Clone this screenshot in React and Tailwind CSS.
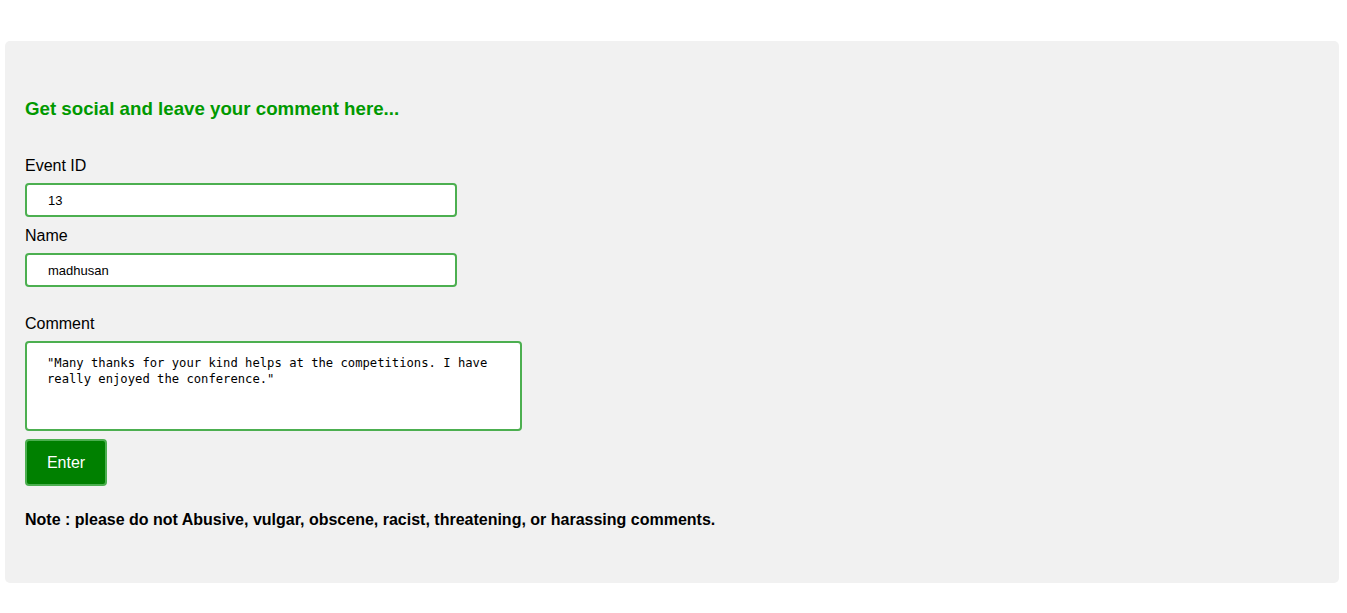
export default function App() {
  return (
    <div className="w-[1347px] h-[613px] bg-white pt-[41px] px-[5px]" style={{ fontFamily: '"Liberation Sans", Arial, sans-serif' }}>
      <div className="w-[1334px] h-[542px] bg-[#f1f1f1] rounded-[5px] px-[20px] pt-[57px]">
        <h3 className="text-[18.72px] leading-[22px] font-bold text-[#009900]">Get social and leave your comment here...</h3>
        <div className="mt-[37px] text-[16px] leading-[18px] text-black">Event ID</div>
        <input
          readOnly
          value="13"
          className="mt-[8px] block w-[432px] h-[34px] border-2 border-[#4caf50] rounded-[4px] bg-white pl-[21px] text-[13px] text-black outline-none"
        />
        <div className="mt-[10px] text-[16px] leading-[18px] text-black">Name</div>
        <input
          readOnly
          value="madhusan"
          className="mt-[8px] block w-[432px] h-[34px] border-2 border-[#4caf50] rounded-[4px] bg-white pl-[21px] text-[13px] text-black outline-none"
        />
        <div className="mt-[28px] text-[16px] leading-[18px] text-black">Comment</div>
        <textarea
          readOnly
          value={'"Many thanks for your kind helps at the competitions. I have really enjoyed the conference."'}
          className="mt-[8px] block w-[497px] h-[90px] border-2 border-[#4caf50] rounded-[4px] bg-white pl-[20px] pr-[12px] pt-[12px] text-[12.2px] leading-[16px] text-black outline-none resize-none"
          style={{ fontFamily: '"DejaVu Sans Mono", monospace' }}
        />
        <button className="mt-[8px] block w-[82px] h-[47px] bg-[#008000] border-2 border-[#4caf50] rounded-[4px] text-white text-[16px]">
          Enter
        </button>
        <p className="mt-[25px] text-[16px] leading-[18px] font-bold text-black">
          Note : please do not Abusive, vulgar, obscene, racist, threatening, or harassing comments.
        </p>
      </div>
    </div>
  );
}
